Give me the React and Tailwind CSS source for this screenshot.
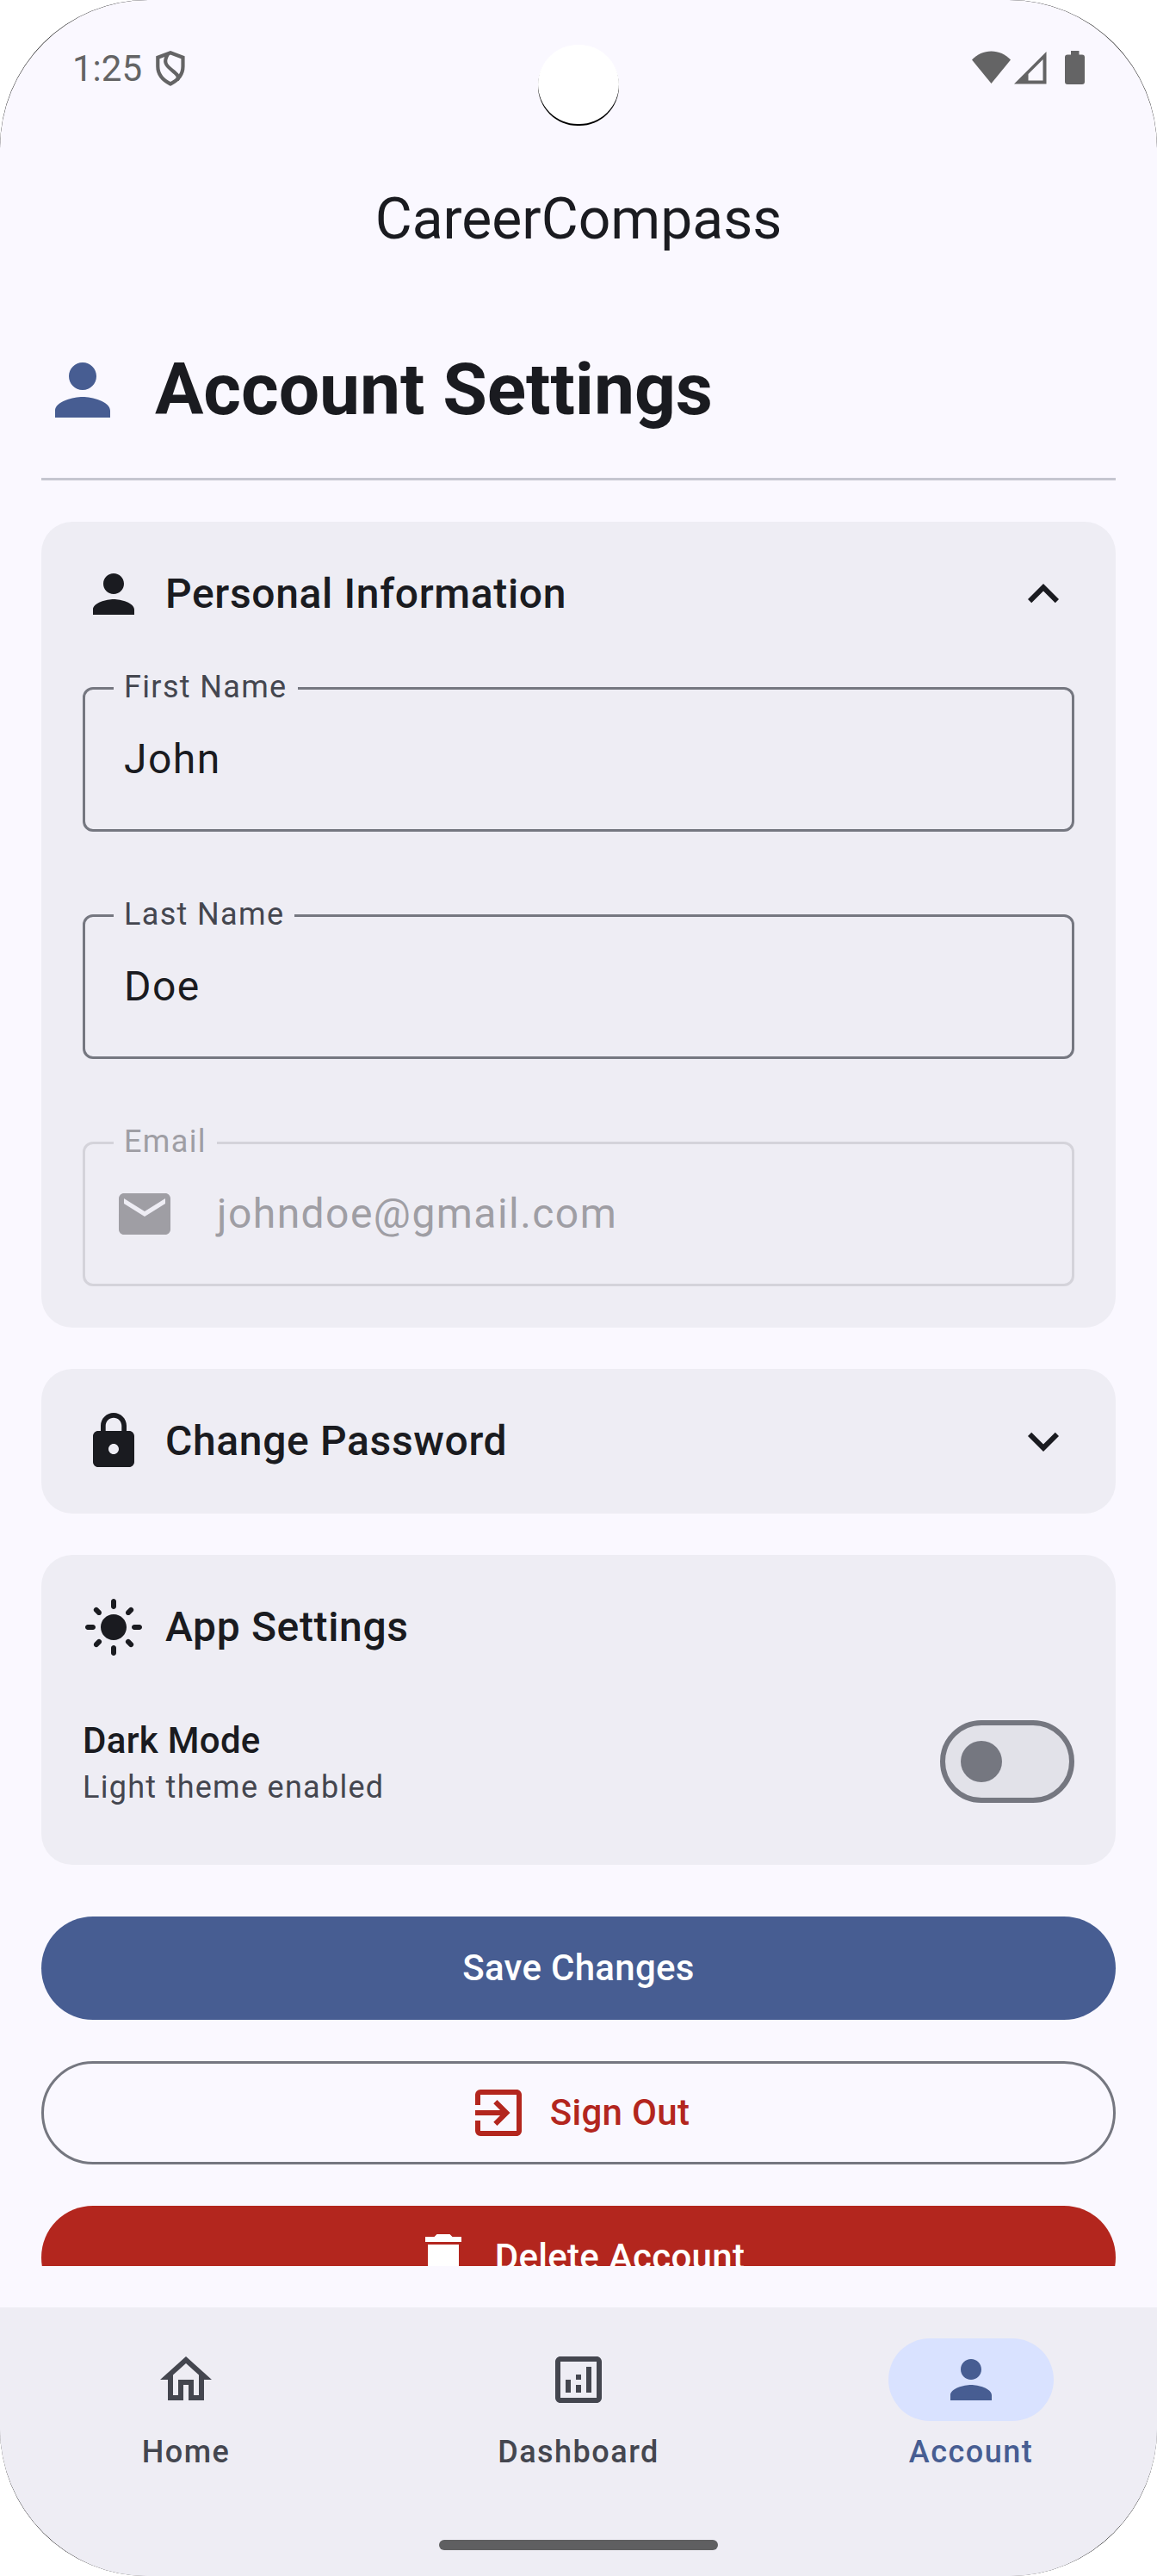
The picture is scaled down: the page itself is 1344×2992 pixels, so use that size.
import React from "react";
import {
  MdPerson,
  MdKeyboardArrowUp,
  MdKeyboardArrowDown,
  MdEmail,
  MdLock,
  MdLightMode,
  MdExitToApp,
  MdDelete,
  MdOutlineHome,
  MdOutlineAnalytics,
} from "react-icons/md";

function StatusBar() {
  return (
    <div className="flex h-[156px] shrink-0 items-start pl-[84px] pr-[84px] pt-[55px] text-[#646465]">
      <span className="text-[42px] leading-[49px]">1:25</span>
      <svg className="ml-[16px] mt-[4px] h-[41px] w-[34px]" viewBox="0 0 34 41" fill="none" stroke="currentColor" strokeWidth="4.2">
        <path d="M17 2.3 31.500 7.800V18c0 9-5.500 16-14.500 20.500C8 34 2.300 27 2.300 18V7.800Z" />
        <path d="M14 4c-5 8-3 12 3 17s11 8 8 13" />
      </svg>
      <div className="ml-auto flex items-start pt-[4px]">
        <svg className="h-[38px] w-[45px]" viewBox="0 0 45 38" fill="currentColor">
          <path d="M0 10.500C6 4 14 .5 22.500.5S39 4 45 10.500L22.500 38Z" />
        </svg>
        <svg className="ml-[4px] mt-[1px] h-[38px] w-[38px]" viewBox="0 0 38 38" fill="currentColor" fillRule="evenodd">
          <path d="M37.500 0V37.500H0ZM33.500 9 16.500 26V33.500H33.500Z" />
        </svg>
        <svg className="ml-[21px] h-[39px] w-[23px]" viewBox="0 0 23 39" fill="currentColor">
          <path d="M7 0h9.500v4.500h3.500a3 3 0 0 1 3 3V36a3 3 0 0 1-3 3H3a3 3 0 0 1-3-3V7.500a3 3 0 0 1 3-3h4Z" />
        </svg>
      </div>
    </div>
  );
}

function Card({ children, className }) {
  return <section className={"rounded-[36px] bg-[#eeedf4] p-12 " + (className || "")}>{children}</section>;
}

function CardHeader({ icon: Icon, title, trailing: Trailing }) {
  return (
    <div className="flex h-[72px] items-center">
      <Icon size={72} />
      <h2 className="ml-6 text-[48px] font-medium leading-[72px] tracking-[0.65px]">{title}</h2>
      {Trailing && <Trailing size={72} className="ml-auto" />}
    </div>
  );
}

function Field({ label, value, icon: Icon, disabled }) {
  return (
    <div
      className={
        "relative flex h-[168px] items-center rounded-[12px] border-[3px] " +
        (disabled ? "border-[#d4d3da] text-[#9f9ea4]" : "border-[#757780]")
      }
    >
      <span
        className={
          "absolute left-[33px] top-[-27px] bg-[#eeedf4] px-3 text-[36px] leading-[48px] tracking-[1.35px] " +
          (disabled ? "text-[#9f9ea4]" : "text-[#44464f]")
        }
      >
        {label}
      </span>
      {Icon && <Icon size={72} className="ml-[33px]" />}
      <span className={"text-[48px] leading-[72px] tracking-[1.45px] " + (Icon ? "ml-12" : "ml-[45px]")}>{value}</span>
    </div>
  );
}

function NavItem({ icon: Icon, label, active }) {
  return (
    <div className={"flex flex-1 flex-col items-center " + (active ? "text-[#475d92]" : "text-[#44464f]")}>
      <div className={"flex h-24 w-[192px] items-center justify-center rounded-full " + (active ? "bg-[#d9e2ff]" : "")}>
        <Icon size={72} />
      </div>
      <span className="mt-3 text-[36px] font-medium leading-[48px] tracking-[1.5px]">{label}</span>
    </div>
  );
}

const buttonClass =
  "flex h-[120px] shrink-0 items-center justify-center gap-6 rounded-full text-[42px] font-medium leading-[60px] tracking-[0.3px] ";

export default function App() {
  return (
    <div className="h-[2992px] w-[1344px] bg-white font-['Roboto',sans-serif]">
      <div className="h-full rounded-[171px] bg-black">
        <div className="relative flex h-full flex-col overflow-hidden rounded-[172px] bg-[#faf8ff] text-[#1a1b20]">
          <StatusBar />
          <header className="flex h-[192px] shrink-0 items-center justify-center pt-[6px] text-[66px] leading-[84px]">
            CareerCompass
          </header>
          <main className="mx-12 flex h-[2284px] shrink-0 flex-col overflow-hidden pt-[57px]">
            <div className="flex h-24 shrink-0 items-center gap-9">
              <MdPerson size={96} className="text-[#475d92]" />
              <h1 className="text-[84px] font-bold leading-[108px] tracking-[-0.08px]">Account Settings</h1>
            </div>
            <div className="mt-[54px] h-[3px] shrink-0 bg-[#c5c6d0]" />

            <Card className="mt-12 h-[936px] shrink-0">
              <CardHeader icon={MdPerson} title="Personal Information" trailing={MdKeyboardArrowUp} />
              <div className="mt-[72px] flex flex-col gap-24">
                <Field label="First Name" value="John" />
                <Field label="Last Name" value="Doe" />
                <Field label="Email" value="johndoe@gmail.com" icon={MdEmail} disabled />
              </div>
            </Card>

            <Card className="mt-12 h-[168px] shrink-0">
              <CardHeader icon={MdLock} title="Change Password" trailing={MdKeyboardArrowDown} />
            </Card>

            <Card className="mt-12 h-[360px] shrink-0">
              <CardHeader icon={MdLightMode} title="App Settings" />
              <div className="mt-12 flex h-36 items-center justify-between">
                <div>
                  <div className="text-[42px] font-medium leading-[60px] tracking-[0.3px]">Dark Mode</div>
                  <div className="text-[36px] leading-[48px] tracking-[1.28px] text-[#44464f]">Light theme enabled</div>
                </div>
                <div className="flex h-24 w-[156px] items-center rounded-full border-[6px] border-[#757780] bg-[#e2e2e9] pl-[18px]">
                  <div className="h-12 w-12 rounded-full bg-[#757780]" />
                </div>
              </div>
            </Card>

            <button className={buttonClass + "mt-[60px] bg-[#475d92] text-white"}>Save Changes</button>
            <button className={buttonClass + "mt-12 border-[3px] border-[#757780] text-[#b3261e]"}>
              <MdExitToApp size={72} />
              Sign Out
            </button>
            <button className={buttonClass + "mt-12 bg-[#b3261e] text-white"}>
              <MdDelete size={72} />
              Delete Account
            </button>
          </main>

          <nav className="mt-12 flex h-[312px] shrink-0 flex-col items-center bg-[#eeedf4] pt-9">
            <div className="flex w-full gap-6">
              <NavItem icon={MdOutlineHome} label="Home" />
              <NavItem icon={MdOutlineAnalytics} label="Dashboard" />
              <NavItem icon={MdPerson} label="Account" active />
            </div>
            <div className="mt-[78px] h-3 w-[324px] rounded-full bg-[#5f5f61]" />
          </nav>

          <div className="absolute left-[625px] top-[52px] h-[92px] w-[94px] rounded-full bg-white shadow-[0_2px_0_#000]" />
        </div>
      </div>
    </div>
  );
}
